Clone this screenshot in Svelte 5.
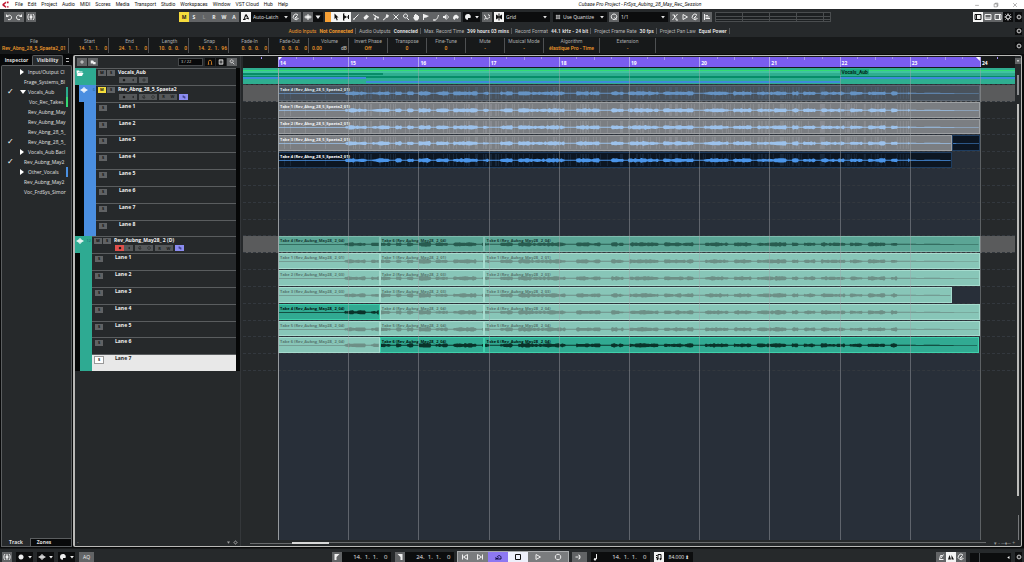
<script lang="ts">
  const menus = ["File", "Edit", "Project", "Audio", "MIDI", "Scores", "Media", "Transport", "Studio", "Workspaces", "Window", "VST Cloud", "Hub", "Help"];

  const automation = ["M", "S", "L", "R", "W", "A"];

  const tools = ["pencil", "eraser", "scissors", "glue", "mute", "zoom", "hand", "comp", "warp", "speaker", "color"];

  const status = [
    { label: "Audio Inputs", value: "Not Connected", warn: true },
    { label: "Audio Outputs", value: "Connected" },
    { label: "Max. Record Time", value: "399 hours 03 mins" },
    { label: "Record Format", value: "44.1 kHz - 24 bit" },
    { label: "Project Frame Rate", value: "30 fps" },
    { label: "Project Pan Law", value: "Equal Power" },
  ];

  const info = [
    { label: "File", value: "Rev_Abng_28_5_Spaeta2_01", size: "file" },
    { label: "Start", value: "14.  1.  1.    0", size: "time" },
    { label: "End", value: "24.  1.  1.    0", size: "time" },
    { label: "Length", value: "10.  0.  0.    0", size: "time" },
    { label: "Snap", value: "14.  2.  1.  96", size: "time" },
    { label: "Fade-In", value: "0.  0.  0.    0", size: "time" },
    { label: "Fade-Out", value: "0.  0.  0.    0", size: "time" },
    { label: "Volume", value: "0.00", unit: "dB", size: "time" },
    { label: "Invert Phase", value: "Off", size: "" },
    { label: "Transpose", value: "0", size: "" },
    { label: "Fine-Tune", value: "0", size: "" },
    { label: "Mute", value: "-", size: "" },
    { label: "Musical Mode", value: "-", size: "" },
    { label: "Algorithm", value: "élastique Pro - Time", size: "wide" },
    { label: "Extension", value: "-", size: "wide" },
  ];

  const visible = [
    { name: "Input/Output Cl", arrow: "right", level: 1 },
    { name: "Frage_Systems_Bl", level: 0 },
    { name: "Vocals_Aub", arrow: "down", level: 1, on: true, color: "teal" },
    { name: "Voc_Rec_Takes", level: 2, color: "green" },
    { name: "Rev_Aubng_May", level: 1 },
    { name: "Rev_Aubng_May", level: 1 },
    { name: "Rev_Abng_28_5_", level: 1 },
    { name: "Rev_Abng_28_5_", level: 1, on: true },
    { name: "Vocals_Aub Bacl", arrow: "right", level: 1 },
    { name: "Rev_Aubng_May2", level: 0, on: true },
    { name: "Other_Vocals", arrow: "right", level: 1, color: "blue" },
    { name: "Rev_Aubng_May2", level: 0 },
    { name: "Voc_FrdSys_Simor", level: 0 },
  ];

  // Timeline view: first visible bar and number of bars in view
  const viewStart = 13.5;
  const viewBars = 11;
  const pos = (bar: number) => ((bar - viewStart) / viewBars) * 100;
  const span = (from: number, to: number) => `left: ${pos(from)}%; width: ${pos(to) - pos(from)}%`;

  const bars = [14, 15, 16, 17, 18, 19, 20, 21, 22, 23, 24];
  const ticks = Array.from({ length: 43 }, (_, i) => 13.75 + i / 4).filter((b) => b % 1 !== 0);

  const blueTake = (n: number, style: string, to = 24) => ({
    name: `Take ${n} (Rev_Abng_28_5_Spaeta2_01)`, from: 14, to, style,
  });

  function greenTakes(takes: number[], styles: string[], suffix: string, end = 24) {
    const cuts = [14, 15.45, 16.94, end];
    return takes.map((n, i) => ({
      name: `Take ${n} (Rev_Aubng_May28_ 2_${suffix})`,
      from: cuts[i], to: cuts[i + 1], style: styles[i],
    }));
  }

  const dim3 = ["mint", "mint", "mint"];

  const rows = [
    { kind: "folder", name: "Vocals_Aub", events: [] },
    { kind: "track", group: "blue", name: "Rev_Abng_28_5_Spaeta2", muted: true, events: [blueTake(4, "slate")] },
    { kind: "lane", group: "blue", name: "Lane 1", events: [blueTake(1, "gray")] },
    { kind: "lane", group: "blue", name: "Lane 2", events: [blueTake(2, "gray")] },
    { kind: "lane", group: "blue", name: "Lane 3", events: [blueTake(3, "gray", 23.6), { name: "", from: 23.6, to: 24, style: "navy" }] },
    { kind: "lane", group: "blue", name: "Lane 4", events: [blueTake(4, "navy", 23.6)] },
    { kind: "lane", group: "blue", name: "Lane 5", events: [] },
    { kind: "lane", group: "blue", name: "Lane 6", events: [] },
    { kind: "lane", group: "blue", name: "Lane 7", events: [] },
    { kind: "lane", group: "blue", name: "Lane 8", events: [] },
    { kind: "track", group: "green", name: "Rev_Aubng_May28_ 2 (D)", record: true, events: greenTakes([4, 6, 6], ["sage", "sage", "sage"], "04") },
    { kind: "lane", group: "green", name: "Lane 1", events: greenTakes([1, 1, 1], dim3, "01") },
    { kind: "lane", group: "green", name: "Lane 2", events: greenTakes([2, 2, 2], dim3, "03") },
    { kind: "lane", group: "green", name: "Lane 3", events: greenTakes([3, 3, 3], dim3, "03", 23.6) },
    { kind: "lane", group: "green", name: "Lane 4", events: greenTakes([4, 4, 4], ["jade", "mint", "mint"], "04") },
    { kind: "lane", group: "green", name: "Lane 5", events: greenTakes([5, 5, 5], dim3, "04") },
    { kind: "lane", group: "green", name: "Lane 6", events: greenTakes([6, 6, 6], ["mint", "jade", "jade"], "04", 23.98) },
    { kind: "lane", group: "green", name: "Lane 7", selected: true, events: [] },
  ];

  const strips = [
    { row: 2, from: 13.5, to: 24.5, color: "lime" },
    { row: 3, from: 13.5, to: 24.5, color: "teal" },
    { row: 4, from: 13.5, to: 15.5, color: "deep" },
    { row: 6, from: 13.5, to: 24.5, color: "deep" },
    { row: 7, from: 13.5, to: 15.25, color: "sky" },
    { row: 7, from: 22, to: 24.5, color: "sky" },
    { row: 9, from: 15.25, to: 22, color: "sky" },
  ];

  function hash(n: number) {
    const s = Math.sin(n * 127.1 + 11.7) * 43758.5453;
    return s - Math.floor(s);
  }

  function loudness(bar: number, seed: number) {
    if (bar < 14.95) return 0.4;
    if (bar > 23.65) return 0.3;
    if (bar > 23) return hash(Math.floor(bar * 9)) > 0.5 ? 0.6 : 0.4;
    const phrase = hash(Math.floor(bar * 12));
    if (phrase < 0.25) return 0.6;
    return 0.6 + phrase * 1.1 + hash(Math.floor(bar * 35) + seed) * 1.1;
  }

  // Mirrored outline of one event, one sample per unit of width
  function waveform(from: number, to: number, seed: number) {
    const top: string[] = [];
    const bottom: string[] = [];
    const n = Math.round((to - from) * 70);
    for (let i = 0; i <= n; i++) {
      const a = loudness(from + i / 70, seed);
      top.push(`${i} ${(8.5 - a).toFixed(2)}`);
      bottom.unshift(`${i} ${(8.5 + a).toFixed(2)}`);
    }
    return `M${top.join("L")}L${bottom.join("L")}Z`;
  }

  function transients(from: number, to: number) {
    let d = "";
    const n = Math.round((to - from) * 70);
    for (let i = 4; i < n; i++) {
      const bar = from + i / 70;
      if (bar > 23) break;
      if (hash(i + 3) > (bar < 15 ? 0.96 : 0.74)) d += `M${i + 0.5} 1V15`;
    }
    return d;
  }

  // Glyphs on a 16 unit canvas; fill and line parts are kept apart
  const icons: Record<string, { fill?: string; line?: string }> = {
    undo: { fill: "M2 2v6h6z", line: "M4 7c4-5 10-2 9 3-1 3-4 4-7 3" },
    redo: { fill: "M14 2v6H8z", line: "M12 7C8 2 2 5 3 10c1 3 4 4 7 3" },
    history: { fill: "M8 5a3 3 0 1 0 .1 0", line: "M4 2c-3 3-3 9 0 12M12 2c3 3 3 9 0 12M8 2v12" },
    punch: { line: "M2 13h5M4 13l3-9 3 1 3 7-4-2-3 3", fill: "M7 3h3v4H6z" },
    circle: { line: "M12 4a5.5 5.5 0 1 0 1 6M6 10l5-5M6 10h5" },
    split: { line: "M1 8h5M10 8h5M8 2v12M4 5v6M12 5v6", fill: "M5 5h6v6H5z" },
    pointer: { fill: "M5 1l8 8H9.5l2 5-2 1-2-5L5 12z" },
    range: { fill: "M4 4l6 4-6 4z", line: "M2 2h3M3 2v12M2 14h3M13 4v8M10 8h3" },
    pencil: { line: "M4 12l9-9", fill: "M2 14l1-4 3 3z" },
    eraser: { fill: "M3 9l6-6 5 4-6 6H5z" },
    scissors: { line: "M2 3l10 6M6 12l1-7M7 7l5 2", fill: "M12 7a2 2 0 1 0 .1 0M6 10a2 2 0 1 0 .1 0" },
    glue: { fill: "M9 2l5 3-2 4-4 1-5 5-1-2 5-4z" },
    mute: { line: "M3 3l10 10M13 3L3 13" },
    zoom: { line: "M7 2a4 4 0 1 0 .1 0M10 10l4 4" },
    hand: { fill: "M4 8V4h2V2h2v1h2v1h2v2h2v5l-3 4H6L2 9z" },
    comp: { fill: "M3 2l11 4-5 3-6 1z", line: "M3 2v12" },
    warp: { line: "M3 14c5 1 8-2 10-10M2 14h5" },
    speaker: { fill: "M2 6h3l4-4v12l-4-4H2z", line: "M11 5c2 2 2 4 0 6" },
    color: { fill: "M2 11c0-6 5-9 8-7l4 4-3 4-3-2-3 4z" },
    palette: { fill: "M8 2a6 6 0 0 0-6 6c0 4 4 7 6 5v-3h5c2-4-1-8-5-8z" },
    cross: { line: "M2 4c4 0 3 8 6 8s2-3 6-4M10 3l4 3M3 13l2-3" },
    snap: { line: "M8 1v14M2 8h12", fill: "M2 3l5 3v4l-5 3zM14 3L9 6v4l5 3z" },
    quant: { line: "M5 2v12M11 2v12M2 5h12M2 11h12" },
    q: { line: "M8 2a5.5 5.5 0 1 0 .1 0M9 9l4 5" },
    soft: { line: "M3 14L13 2M3 4h4v4M10 9v5h4" },
    play: { line: "M4 3l9 5-9 5z" },
    align: { line: "M3 2v12M5 5h5M5 8h8M5 11h9" },
    left: { line: "M2 3h12v10H2zM5 3v10" },
    lower: { line: "M2 3h12v10H2zM2 10h12" },
    right: { line: "M2 3h12v10H2zM11 3v10" },
    gear: { line: "M8 4a4 4 0 1 0 .1 0M8 1v3M8 12v3M1 8h3M12 8h3M3 3l2 2M11 11l2 2M13 3l-2 2M3 13l2-2" },
    plus: { line: "M8 3v10M3 8h10" },
    presets: { fill: "M2 4h6l2 2v6H2zM8 8h7v6H8z" },
    horse: { line: "M4 14V7c0-5 8-5 8 0v7M2 14h4M10 14h4" },
    frame: { line: "M3 2h10v12H3zM3 5h10M3 11h10" },
    folder: { fill: "M1 3h5l1 2h6v2H4l-2 6zM4 8h11l-3 6H2z" },
    wave: { line: "M1 8h14M4 6v4M6 4v8M8 2v12M10 4v8M12 6v4" },
    dot: { fill: "M8 3a5 5 0 1 0 .1 0" },
    monitor: { fill: "M11 3v10L4 8z" },
    lanes: { line: "M2 4h6M2 8h12M8 12h6M8 4v8" },
    edit: { line: "M4 4h8v8H4z" },
    down: { fill: "M3 5h10l-5 7z" },
    locL: { fill: "M3 2h10L7 8v6H3z" },
    locR: { fill: "M13 2H3l6 6v6h4z" },
    prev: { line: "M3 3v10M13 3v10L5 8z" },
    next: { line: "M13 3v10M3 3v10l8-5z" },
    cycle: { line: "M2 12h12v-3c0-5-7-5-8 0M3 9l3 3 3-3" },
    stop: { line: "M3 3h10v10H3z" },
    record: { line: "M8 2.5a5.5 5.5 0 1 0 .1 0" },
    jog: { fill: "M6 3a5 5 0 1 1 0 10l3-5z", line: "M1 8h6" },
    note: { line: "M9 2v10", fill: "M6 10a2.5 2.5 0 1 0 .1 0" },
    tempo: { line: "M6 3v9M12 3v9M6 3h6M2 5h3M2 9h3", fill: "M5 10a2 2 0 1 0 .1 0M11 10a2 2 0 1 0 .1 0" },
    click: { line: "M4 13h9M5 13l2-8h4M8 10l5-7" },
    precount: { fill: "M2 13l3-9 3 9zM9 13V4l5 9z" },
    min: { line: "M3 9h10" },
    max: { line: "M3 5h8v8H3zM6 5V3h7v8h-2" },
    close: { line: "M3 3l10 10M13 3L3 13" },
  };
</script>

{#snippet icon(name: string)}
  <svg class="icon" viewBox="0 0 16 16" aria-hidden="true">
    {#if icons[name].fill}<path class="solid" d={icons[name].fill} />{/if}
    {#if icons[name].line}<path class="line" d={icons[name].line} />{/if}
  </svg>
{/snippet}

{#snippet btn(name: string, look = "")}
  <button class="tool {look}" aria-label={name}>{@render icon(name)}</button>
{/snippet}

<div class="app">
  <header class="titlebar">
    <svg class="logo" viewBox="0 0 16 16" aria-hidden="true">
      <path d="M9 1L1 7v3l8 6v-4L5 8.5 9 5zM11 1h4v4h-4zM11 12h4v3h-4z" />
    </svg>
    <nav>
      {#each menus as menu}<button>{menu}</button>{/each}
    </nav>
    <h1>Cubase Pro Project - FrSys_Aubing_28_May_Rec_Session</h1>
    <div class="window-buttons">
      {@render btn("min")}{@render btn("max")}{@render btn("close")}
    </div>
  </header>

  <div class="toolbar">
    <div class="bunch">{@render btn("undo")}{@render btn("redo")}</div>
    {@render btn("history")}
    <div class="bunch automation">
      {#each automation as mode}
        <button class="tool" class:yellow={mode === "M"} class:off={mode === "L"}>{mode}</button>
      {/each}
    </div>
    <div class="bunch">
      {@render btn("punch", "white")}
      <label class="drop latch"><select aria-label="Automation mode"><option>Auto-Latch</option></select>{@render icon("down")}</label>
      {@render btn("circle")}
    </div>
    <div class="bunch">{@render btn("split")}{@render btn("down", "black")}</div>
    <div class="bunch">
      <button class="tool orange" aria-label="Combined tools"></button>
      {@render btn("pointer", "white")}{@render btn("range", "white")}
      {#each tools as tool}{@render btn(tool)}{/each}
    </div>
    <div class="bunch">{@render btn("palette", "black")}{@render btn("down", "black narrow")}</div>
    {@render btn("cross")}
    <div class="bunch">
      {@render btn("snap", "white")}
      <label class="drop grid-type"><select aria-label="Grid type"><option>Grid</option></select>{@render icon("down")}</label>
    </div>
    <label class="drop quantize">{@render icon("quant")}<select aria-label="Grid resolution"><option>Use Quantize</option></select>{@render icon("down")}</label>
    <div class="bunch">
      {@render btn("q")}
      <label class="drop preset"><select aria-label="Quantize preset"><option>1/1</option></select>{@render icon("down")}</label>
    </div>
    <div class="bunch">{@render btn("soft")}{@render btn("play")}{@render btn("circle")}</div>
    {@render btn("align")}
    <div class="meter"><i></i><i></i><i></i><i></i></div>
    <div class="bunch zones">
      {@render btn("left", "white")}{@render btn("lower")}{@render btn("right")}{@render btn("gear", "black")}
    </div>
    {@render btn("gear", "black narrow")}
  </div>

  <div class="status">
    <dl>
      {#each status as item}
        <div class:warn={item.warn}><dt>{item.label}</dt><dd>{item.value}</dd></div>
      {/each}
    </dl>
    {@render btn("gear", "black narrow")}
  </div>

  <div class="info">
    <dl>
      {#each info as item}
        <div class={item.size}>
          <dt>{item.label}</dt>
          <dd>{item.value}{#if item.unit}<span>{item.unit}</span>{/if}</dd>
        </div>
      {/each}
    </dl>
    {@render btn("gear", "black narrow")}
  </div>

  <main>
    <aside>
      <div class="tabs">
        <button>Inspector</button><button class="current">Visibility</button><span class="burger"></span>
      </div>
      <ul>
        {#each visible as item}
          <li class="level{item.level}">
            <span class="check">{item.on ? "✓" : ""}</span>
            <span class="arrow {item.arrow ?? ''}"></span>
            <span class="label">{item.name}</span>
            <span class="mark {item.color ?? ''}"></span>
          </li>
        {/each}
      </ul>
      <div class="tabs bottom">
        <button>Track</button><button class="current">Zones</button>
      </div>
    </aside>

    <section class="project">
      <div class="tracklist">
        <div class="track-tools">
          {@render btn("plus")}{@render btn("presets")}
          <output>3 / 22</output>
          {@render btn("horse", "black amber")}{@render btn("frame", "black")}{@render btn("zoom")}
        </div>
        <div class="rows">
          {#each rows as row}
            <div class="row {row.kind} {row.group ?? ''}" class:selected={row.selected}>
              <div class="stripe">
                {#if row.kind === "folder"}{@render icon("folder")}{/if}
                {#if row.kind === "track"}{@render icon("wave")}<small>{row.group === "blue" ? "6" : "12"}</small>{/if}
              </div>
              <div class="body">
                {#if row.kind === "lane"}
                  <button class="ms">S</button>
                  <span class="name">{row.name}</span>
                {:else}
                  <button class="ms" class:muted={row.muted}>M</button>
                  <button class="ms">S</button>
                  <div class="column">
                    <span class="name">{row.name}</span>
                    <div class="controls">
                      <span class="pair"><button class:rec={row.record} aria-label="Record enable">{@render icon("dot")}</button><button aria-label="Monitor">{@render icon("monitor")}</button></span>
                      {#if row.kind === "folder"}
                        <span class="pair"><button aria-label="Group edit">{@render icon("edit")}</button></span>
                      {:else}
                        <span class="pair"><button aria-label="Edit channel">{@render icon("circle")}</button><button aria-label="Inserts">{@render icon("record")}</button></span>
                        <span class="pair"><button>R</button><button>W</button></span>
                        <button class="lanes" aria-label="Show lanes">{@render icon("lanes")}</button>
                      {/if}
                    </div>
                  </div>
                {/if}
              </div>
            </div>
          {/each}
        </div>
        <div class="list-foot"><span>-</span>{@render icon("down")}{@render icon("gear")}</div>
      </div>

      <div class="arrange">
        <div class="ruler">
          <div class="locators" style={span(14, 24)}></div>
          {#each ticks as tick}<i class:half={tick % 0.5 === 0} style="left: {pos(tick)}%"></i>{/each}
          {#each bars as bar}<b style="left: {pos(bar)}%">{bar}</b>{/each}
        </div>
        <div class="canvas">
          <div class="cycle-range" style={span(14, 24)}></div>
          <div class="rows">
            {#each rows as row, r}
              <div class="row {row.kind}">
                {#if row.kind === "folder"}
                  <div class="overview">
                    {#each strips as s}
                      <i class={s.color} style="{span(s.from, s.to)}; top: {s.row * 10 - 10}%"></i>
                    {/each}
                    <b style="left: {pos(22)}%">Vocals_Aub</b>
                  </div>
                {/if}
                {#each row.events as event}
                  <div class="event {event.style}" style={span(event.from, event.to)}>
                    <svg viewBox="0 0 {Math.round((event.to - event.from) * 70)} 16" preserveAspectRatio="none" aria-hidden="true">
                      {#if row.group === "blue"}<path class="hits" d={transients(event.from, event.to)} />{/if}
                      <path class="wave" d={waveform(event.from, event.to, r)} />
                    </svg>
                    <span>{event.name}</span>
                  </div>
                {/each}
              </div>
            {/each}
          </div>
          {#each bars as bar}<i class="barline" class:start={bar === 14} style="left: {pos(bar)}%"></i>{/each}
        </div>
        <div class="hscroll"><i></i><em></em><span>▾ - ─♦─ +</span></div>
      </div>

      <div class="vscroll">
        {@render btn("down")}
        <i class="thumb short"></i><i class="thumb long"></i>
        <i class="thumb zoomer"></i>
      </div>
    </section>
  </main>

  <footer>
    <div class="side">
      {@render btn("history")}
      <div class="bunch">{@render btn("dot", "black")}{@render btn("down", "black narrow")}</div>
      <div class="bunch">{@render btn("wave", "black")}{@render btn("down", "black narrow")}</div>
      <div class="bunch">{@render btn("palette", "black")}{@render btn("down", "black narrow")}</div>
      <button class="tool aq">AQ</button>
    </div>
    <div class="bunch">{@render btn("locL")}<input class="time" aria-label="Left locator" value="14.  1.  1.    0" /></div>
    <div class="bunch">{@render btn("locR")}<input class="time" aria-label="Right locator" value="24.  1.  1.    0" /></div>
    <div class="bunch transport">
      {@render btn("prev")}{@render btn("next")}{@render btn("cycle", "purple")}{@render btn("stop", "white")}{@render btn("play")}{@render btn("record")}
    </div>
    {@render btn("jog", "wide")}
    <div class="bunch">{@render btn("note", "black")}<input class="time" aria-label="Position" value="14.  1.  1.    0" /></div>
    <div class="bunch">{@render btn("tempo", "white")}<input class="tempo" aria-label="Tempo" value="84.000 ⬍" /></div>
    <div class="side end">
      <div class="bunch">{@render btn("click")}{@render btn("precount", "white")}{@render btn("circle")}</div>
      <div class="level-box"><i></i>{@render icon("monitor")}</div>
      {@render btn("gear", "black narrow")}
    </div>
  </footer>
</div>

<style>
  :global(body) {
    background: #08090a;
  }

  .app {
    display: flex;
    flex-direction: column;
    height: 100vh;
    overflow: hidden;
    font: 5px/7px "Open Sans", "Noto Sans", sans-serif;
    color: #d4d4d4;
    background: #08090a;
  }

  button, select, input {
    font: inherit;
    color: inherit;
    padding: 0;
    margin: 0;
    border: 0;
    background: none;
    border-radius: 0;
    white-space: nowrap;
  }

  h1, dl, dd, ul {
    margin: 0;
    padding: 0;
  }

  i, em {
    display: block;
  }

  .icon {
    display: block;
    width: 8px;
    height: 8px;
    flex: none;
  }

  .solid {
    fill: currentColor;
  }

  .line {
    fill: none;
    stroke: currentColor;
    stroke-width: 2;
  }

  /* title bar */
  .titlebar {
    display: flex;
    align-items: center;
    height: 9px;
    padding: 0 4px 0 2px;
    background: #fff;
    color: #111;
    font-family: Roboto, "Open Sans", sans-serif;
  }

  .logo {
    width: 7px;
    height: 7px;
    margin-right: 6px;
    fill: #c01530;
  }

  nav {
    display: flex;
    gap: 5px;
    padding-right: 20px;
  }

  h1 {
    flex: 1;
    text-align: center;
    font-size: 5px;
    font-weight: 400;
    font-style: italic;
  }

  .window-buttons {
    display: flex;
    gap: 9px;
  }

  .window-buttons .tool {
    background: none;
    color: #333;
    height: 8px;
  }

  .window-buttons .icon {
    width: 6px;
    height: 6px;
  }

  .window-buttons .line {
    stroke-width: 1;
  }

  /* toolbar */
  .toolbar {
    display: flex;
    align-items: center;
    gap: 2px;
    height: 16px;
    padding: 0 2px 0 4px;
    background: #26292b;
  }

  .tool {
    display: flex;
    align-items: center;
    justify-content: center;
    width: 10px;
    height: 10px;
    flex: none;
    background: #626466;
    color: #f0f0f0;
    font-weight: 700;
  }

  .narrow {
    width: 7px;
  }

  .narrow .icon {
    width: 6px;
    height: 6px;
  }

  .white {
    background: #f4f4f4;
    color: #111;
  }

  .black {
    background: #0c0d0e;
    color: #eee;
  }

  .yellow {
    background: #f6dc3c;
    color: #222;
  }

  .orange {
    width: 6px;
    background: #f7a035;
  }

  .amber {
    color: #f0932b;
  }

  .off {
    color: #8b8d8f;
  }

  .bunch {
    display: flex;
    flex: none;
  }

  .automation {
    margin-left: 141px;
  }

  .drop {
    display: flex;
    align-items: center;
    height: 10px;
    padding: 0 2px;
    gap: 2px;
    background: #0c0d0e;
    color: #e2e2e2;
    box-sizing: border-box;
  }

  .drop select {
    flex: 1;
    min-width: 0;
    appearance: none;
    outline: 0;
  }

  .drop .icon {
    width: 6px;
    height: 6px;
  }

  .latch {
    width: 40px;
  }

  .grid-type {
    width: 46px;
    margin-right: 1px;
  }

  .quantize {
    width: 54px;
  }

  .preset {
    width: 49px;
  }

  .meter {
    display: grid;
    grid-template-columns: repeat(4, 27px) 5px;
    width: 116px;
    height: 10px;
    margin-left: 1px;
    box-sizing: border-box;
    border: 1px solid #4a4d4f;
    background: linear-gradient(#4a4d4f, #4a4d4f) 0 3px / 100% 1px no-repeat, linear-gradient(#4a4d4f, #4a4d4f) 0 6px / 100% 1px no-repeat, #1d2022;
  }

  .meter i {
    border-right: 1px solid #4a4d4f;
  }

  .zones {
    margin-left: auto;
  }

  /* status and info lines */
  .status, .info {
    display: flex;
    align-items: center;
    padding-right: 2px;
    font-family: Roboto, "Open Sans", sans-serif;
  }

  .status {
    height: 12px;
    background: #26292b;
  }

  .status .tool, .info .tool {
    height: 7px;
  }

  dl {
    display: flex;
    flex: 1;
  }

  .status dl {
    justify-content: center;
  }

  .status dl div {
    display: flex;
    gap: 3px;
    padding: 0 2px 0 3px;
    border-right: 1px solid #55585a;
    line-height: 6px;
  }

  .status dt {
    color: #b4b4b4;
  }

  .status dd {
    font-weight: 700;
    color: #dedede;
  }

  .status .warn dt, .status .warn dd {
    color: #f09a2c;
  }

  .info {
    height: 17px;
    background: #17191a;
  }

  .info dl div {
    width: 39px;
    padding: 0 1px;
    height: 15px;
    box-sizing: border-box;
    border-right: 1px solid #4e5052;
    text-align: center;
  }

  .info dl .file {
    width: 69px;
  }

  .info dl .wide {
    width: 56px;
  }

  .info dl .time {
    width: 40px;
    padding-left: 3px;
  }

  .info dt {
    color: #a8aaab;
  }

  .info dd {
    color: #f09a2c;
    font-weight: 500;
    white-space: pre;
  }

  .time dd {
    display: flex;
    justify-content: flex-end;
  }

  .time dd span {
    flex: 1;
    text-align: right;
    color: #b8b8b8;
  }

  /* main area */
  main {
    display: flex;
    flex: 1;
    min-height: 0;
    padding: 1px 2px 1px 1px;
  }

  aside {
    display: flex;
    flex-direction: column;
    width: 71px;
    margin-right: 1px;
    flex: none;
  }

  .tabs {
    display: flex;
    height: 10px;
    font-weight: 700;
    color: #ddd;
  }

  .tabs button {
    width: 31px;
    text-align: center;
  }

  .tabs .current {
    background: #26292b;
    border: 1px solid #5b5e60;
    border-bottom: 0;
    border-radius: 2px 2px 0 0;
    box-sizing: border-box;
  }

  .burger {
    width: 3px;
    height: 2px;
    margin: 3px 0 0 3px;
    border: solid #bbb;
    border-width: 1px 0;
  }

  aside ul {
    flex: 1;
    padding-top: 1px;
    list-style: none;
    background: #26292b;
    border: 1px solid #5b5e60;
    border-bottom: 0;
    border-radius: 2px 2px 0 0;
  }

  aside li {
    display: flex;
    align-items: center;
    height: 10px;
  }

  .check {
    width: 18px;
    padding-left: 5px;
    box-sizing: border-box;
    font: 700 8px/10px "DejaVu Sans", sans-serif;
    color: #fff;
    flex: none;
  }

  .arrow {
    width: 8px;
    height: 6px;
    flex: none;
  }

  .level0 .arrow {
    width: 4px;
  }

  .level2 .arrow {
    width: 9px;
  }

  .arrow::before {
    content: "";
    display: block;
  }

  .arrow.right::before {
    width: 4px;
    height: 6px;
    background: #fff;
    clip-path: polygon(0 0, 100% 50%, 0 100%);
  }

  .arrow.down::before {
    width: 6px;
    height: 4px;
    margin-top: 1px;
    background: #fff;
    clip-path: polygon(0 0, 100% 0, 50% 100%);
  }

  .label {
    flex: 1;
    min-width: 0;
    white-space: nowrap;
    color: #e0e0e0;
  }

  .mark {
    width: 2px;
    height: 10px;
    margin-right: 3px;
    flex: none;
  }

  .mark.teal {
    background: #2aa98c;
  }

  .mark.green {
    background: #34d874;
  }

  .mark.blue {
    background: #4a90e2;
  }

  .tabs.bottom {
    height: 9px;
    background: #26292b;
    border: 1px solid #5b5e60;
    border-width: 0 1px 1px;
    box-sizing: border-box;
  }

  .bottom button {
    width: 28px;
  }

  .bottom .current {
    flex: 1;
    padding-right: 14px;
    background: #08090a;
    border-radius: 0;
    border-width: 1px 0 0 1px;
  }

  .project {
    display: flex;
    flex: 1;
    min-width: 0;
    border: 1px solid #b9b9b7;
    border-width: 1px 1px 1px 2px;
    border-radius: 2px;
    background: #26292b;
  }

  /* track list */
  .tracklist {
    display: flex;
    flex-direction: column;
    width: 165px;
    flex: none;
    border-right: 1px solid #34373a;
  }

  .track-tools {
    display: flex;
    align-items: center;
    gap: 1px;
    height: 12px;
    flex: none;
    padding: 0 3px 0 2px;
    box-sizing: border-box;
    font-size: 4px;
  }

  .track-tools .tool {
    height: 8px;
  }

  .track-tools .icon {
    width: 6px;
    height: 6px;
  }

  output {
    width: 25px;
    height: 8px;
    margin-left: auto;
    margin-right: 1px;
    padding-left: 2px;
    box-sizing: border-box;
    background: #08090a;
    border: 1px solid #45484a;
    line-height: 6px;
  }

  .rows {
    display: grid;
    grid-template-rows: repeat(18, 1fr);
    height: 303px;
    flex: none;
  }

  .tracklist .row {
    display: flex;
    min-height: 0;
    padding-right: 4px;
    background: #060707;
  }

  .stripe {
    display: flex;
    justify-content: space-between;
    width: 20px;
    box-sizing: border-box;
    padding: 1px;
    flex: none;
    color: #fff;
    background: #2eaa92;
  }

  .stripe small {
    font-size: 4px;
    color: #1d5f78;
  }

  .blue .stripe {
    width: 17px;
    margin-left: 4px;
    background: #4a8ee0;
  }

  .blue.lane .stripe {
    width: 12px;
    margin-left: 9px;
  }

  .folder .stripe {
    width: 21px;
  }

  .green .stripe {
    width: 17px;
  }

  .green.lane .stripe {
    width: 12px;
    margin-left: 5px;
  }

  .body {
    display: flex;
    gap: 1px;
    flex: 1;
    padding-left: 2px;
    border-top: 1px solid #5a5d5f;
    background: #26292b;
    overflow: hidden;
  }

  .ms {
    width: 8px;
    height: 6px;
    margin-top: 1px;
    font: 700 4px/6px "Open Sans", sans-serif;
    background: #606264;
    color: #111;
    flex: none;
  }

  .ms.muted {
    background: #f6dc3c;
  }

  .lane .ms {
    margin: 2px 10px 0 1px;
  }

  .name {
    display: block;
    font-weight: 700;
    line-height: 7px;
    color: #f2f2f2;
    white-space: nowrap;
  }

  .column {
    margin-left: 2px;
  }

  .lane .name {
    padding-left: 1px;
  }

  .controls {
    display: flex;
    gap: 2px;
    padding-left: 1px;
    margin-top: 1px;
  }

  .controls button {
    display: flex;
    align-items: center;
    justify-content: center;
    width: 9px;
    height: 6px;
    font-size: 4px;
    font-weight: 700;
    background: #55585a;
    color: #1a1a1a;
  }

  .controls .icon {
    width: 4px;
    height: 4px;
  }

  .pair {
    display: flex;
  }

  .controls .rec {
    background: #e0504c;
  }

  .controls .lanes {
    background: #8b8cf0;
    color: #12124a;
  }

  .selected .body {
    background: #e8e8e8;
  }

  .selected .name {
    color: #222;
  }

  .selected .ms {
    background: #fff;
    outline: 1px solid #999;
  }

  .list-foot {
    display: flex;
    align-items: center;
    gap: 2px;
    margin-top: auto;
    padding: 0 2px;
    height: 7px;
    color: #a0a0a0;
  }

  .list-foot span {
    flex: 1;
  }

  .list-foot .icon {
    width: 5px;
    height: 5px;
  }

  /* arrange view */
  .arrange {
    display: flex;
    flex-direction: column;
    flex: 1;
    min-width: 0;
    margin-left: 2px;
  }

  .ruler {
    position: relative;
    height: 12px;
    flex: none;
    background: #17191a;
    overflow: hidden;
  }

  .locators {
    position: absolute;
    top: 1px;
    bottom: 1px;
    background: #7a5df0;
  }

  .locators::before, .locators::after {
    content: "";
    position: absolute;
    top: 0;
    left: 0;
    width: 4px;
    height: 4px;
    background: #fff;
    clip-path: polygon(0 0, 100% 0, 0 100%);
  }

  .locators::after {
    left: auto;
    right: 0;
    clip-path: polygon(0 0, 100% 0, 100% 100%);
  }

  .ruler i {
    position: absolute;
    top: 1px;
    width: 1px;
    height: 2px;
    background: #a796f4;
  }

  .ruler i.half {
    height: 3px;
  }

  .ruler b {
    position: absolute;
    top: 1px;
    height: 10px;
    padding: 3px 0 0 1px;
    box-sizing: border-box;
    border-left: 1px solid #b5a7f6;
    color: #fff;
  }

  .canvas {
    position: relative;
    flex: 1;
    min-height: 0;
    overflow: hidden;
  }

  .cycle-range {
    position: absolute;
    top: 0;
    bottom: 0;
    background: #282f39;
  }

  .arrange .rows {
    position: relative;
  }

  .arrange .row {
    position: relative;
    min-height: 0;
    border-bottom: 1px dashed #33383e;
  }

  .arrange .row.track {
    background: #5a5b5c;
  }

  .overview {
    position: absolute;
    inset: 0;
    background: #2fae90;
  }

  .overview i {
    position: absolute;
    height: 12%;
  }

  .lime {
    background: #34dc74;
  }

  .overview .teal {
    background: #3fc49f;
  }

  .deep {
    background: #078c68;
  }

  .sky {
    background: #3f8ad8;
  }

  .overview b {
    position: absolute;
    top: 1px;
    padding: 0 1px;
    line-height: 6px;
    font-family: Roboto, sans-serif;
    background: #1fa57f;
    color: #062a20;
    border-left: 1px solid #0b7256;
  }

  .event {
    position: absolute;
    top: 0;
    bottom: 0;
    box-sizing: border-box;
    overflow: hidden;
    border: 1px solid transparent;
  }

  .event svg {
    position: absolute;
    inset: 0;
    width: 100%;
    height: 100%;
  }

  .event span {
    position: relative;
    display: block;
    padding-left: 1px;
    font-size: 4px;
    line-height: 7px;
    font-weight: 700;
    white-space: pre;
  }

  .hits {
    fill: none;
    stroke: currentColor;
    opacity: 0.14;
  }

  .slate {
    background: #49525c;
    border-color: #5d6874;
    color: #dfe5ea;
  }

  .slate .wave {
    fill: #6593c4;
  }

  .slate .hits, .navy .hits {
    stroke: #6da5e0;
  }

  .gray {
    background: #7b7e82;
    border-color: #9da0a3;
    color: #f0f2f4;
  }

  .gray .wave {
    fill: #9cc2ec;
  }

  .navy {
    background: #0c1622;
    border-color: #1f3d60;
    color: #fff;
  }

  .navy .wave {
    fill: #4a95ea;
  }

  .sage {
    background: #5ba595;
    border-color: #7fbcaf;
    color: #193a34;
  }

  .sage .wave {
    fill: #285c50;
  }

  .mint {
    background: #88c6b8;
    border-color: #a6dccf;
    color: #587870;
  }

  .mint .wave {
    fill: #6d8f86;
  }

  .jade {
    background: #31aa92;
    border-color: #3fd0ac;
    color: #03150f;
  }

  .jade .wave {
    fill: #0a332a;
  }

  .barline {
    position: absolute;
    top: 0;
    bottom: 0;
    width: 1px;
    background: #a2a6aa;
    opacity: 0.45;
  }

  .barline.start {
    opacity: 0.9;
  }

  .hscroll {
    display: flex;
    align-items: center;
    height: 6px;
    padding-left: 7px;
    flex: none;
    color: #999;
    line-height: 6px;
  }

  .hscroll i {
    width: 42px;
    height: 1px;
    background: #696b6d;
  }

  .hscroll em {
    flex: 1;
    height: 2px;
    margin-right: 8px;
    background: linear-gradient(90deg, #d8d8d8 37px, transparent 37px), linear-gradient(#696b6d, #696b6d) 0 0 / 100% 1px no-repeat;
  }

  .vscroll {
    display: flex;
    flex-direction: column;
    align-items: center;
    width: 6px;
    padding: 2px 0 6px;
  }

  .vscroll .tool {
    width: 6px;
    height: 6px;
    margin-bottom: 11px;
  }

  .vscroll .icon {
    width: 4px;
    height: 4px;
  }

  .thumb {
    width: 2px;
    background: #bdbdbb;
  }

  .short {
    height: 20px;
    background: #8c8e90;
    margin-bottom: 9px;
  }

  .long {
    flex: 1;
    margin-bottom: 19px;
  }

  .zoomer {
    width: 1px;
    height: 25px;
    background: #77797b;
  }

  /* transport bar */
  footer {
    display: flex;
    align-items: center;
    gap: 4px;
    height: 14px;
    padding: 3px 2px 0;
    box-sizing: border-box;
    background: #26292b;
    border-top: 1px solid #17191a;
  }

  .side {
    display: flex;
    align-items: center;
    gap: 4px;
    flex: 1;
  }

  .end {
    justify-content: flex-end;
  }

  .aq {
    width: 15px;
    font-weight: 400;
  }

  footer input {
    height: 10px;
    width: 49px;
    padding-right: 3px;
    box-sizing: border-box;
    text-align: right;
    font-size: 6px;
    background: #0c0d0e;
    color: #e6e6e6;
    white-space: pre;
  }

  footer .tempo {
    width: 29px;
    font-size: 5px;
  }

  .transport {
    outline: 1px solid #a9abad;
  }

  .transport .tool {
    width: 20px;
    background: #7a7c7e;
  }

  .transport .tool:nth-child(-n + 2) {
    width: 15px;
  }

  .transport .purple {
    background: #8d78f2;
    color: #15104a;
  }

  .transport .white {
    background: #eef0fb;
  }

  .wide {
    width: 15px;
  }

  .level-box {
    display: flex;
    align-items: center;
    justify-content: space-between;
    width: 41px;
    height: 9px;
    background: #0c0d0e;
  }

  .level-box i {
    width: 9px;
    height: 9px;
    border-right: 1px solid #44474a;
  }

  .level-box .icon {
    width: 5px;
    height: 5px;
    color: #fff;
  }
</style>
